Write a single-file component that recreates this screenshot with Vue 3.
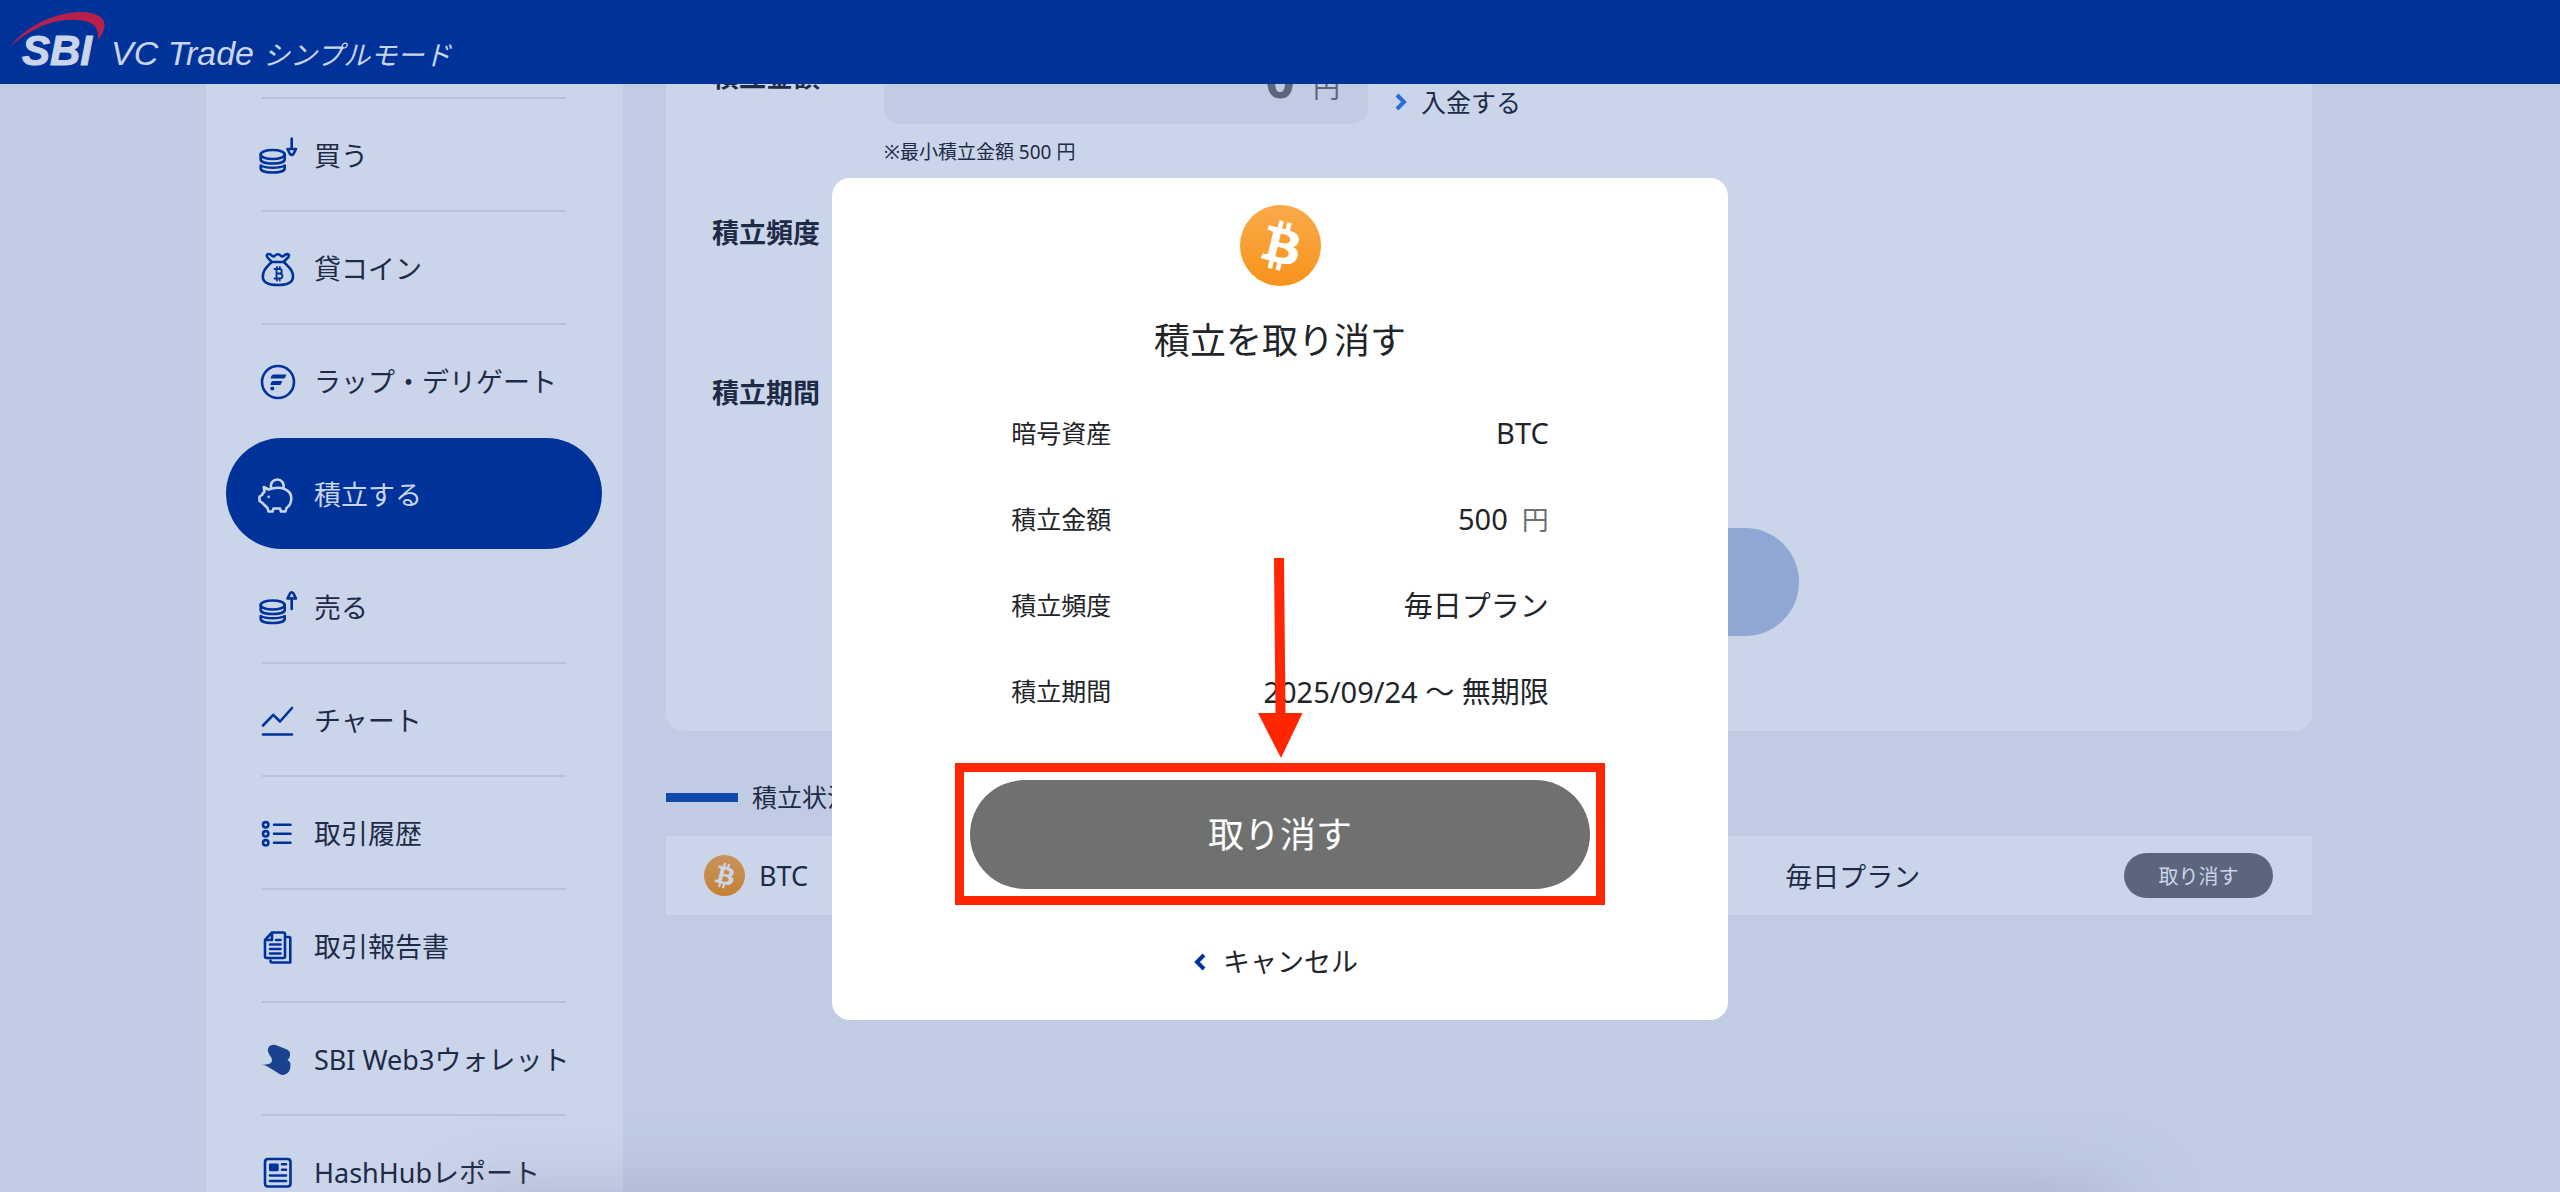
<template>
  <div class="app">
    <header class="header">
      <a href="#" class="brand">
        <span class="brand-logo">
          <svg class="swoosh" viewBox="0 0 96 36" aria-hidden="true">
            <path d="M0 34C12 17 40 1 69 0C88 0 96 7 93 17C92 21 90 24 87 28C88 17 84 9 66 8C42 6 18 18 0 34Z" fill="#b8204c" />
          </svg>
          SBI
        </span>
        <span class="brand-name">VC Trade</span>
        <span class="brand-mode">シンプルモード</span>
      </a>
    </header>

    <div class="content">
      <nav class="sidebar">
        <ul>
          <li v-for="item in menu" :key="item.label" :class="{ active: item.active }">
            <a href="#">
              <svg class="menu-icon" viewBox="0 0 40 40" aria-hidden="true">
                <g v-if="item.icon === 'bag'">
                  <path d="M13.5 14C8 20 4.8 22.500 4.800 28.500C4.800 34.500 10.500 37 20 37S35 34.500 35 28.500C35 22.500 31.500 20 26 14Z" />
                  <path d="M13.500 14C12.500 11.500 8.500 10 8.700 7.500C9 5.500 11.500 5.800 13 6.800C14.500 9 16 9 17 7.500C18.500 5.800 21 5.800 22.500 7.500C24 9 25.500 9 27 6.800C28.500 5.800 30.800 5.800 31 7.500C31 10 27 11.500 26 14" />
                  <path class="thin" d="M16.500 21H21.500C24.500 21 24.500 25.500 21.500 25.500H18.500M21.500 25.500C25.500 25.500 25.500 30.500 21.500 30.500H16.500M18.500 21V30.500M19 19V21M21.800 19V21M19 30.500V32.500M21.800 30.500V32.500" />
                </g>
                <g v-else>
                  <path v-for="(d, i) in icons[item.icon].lines" :key="i" :d="d" />
                  <path v-for="(d, i) in icons[item.icon].fills" :key="'f' + i" :d="d" class="solid" :class="item.icon" />
                </g>
              </svg>
              <span>{{ item.label }}</span>
            </a>
          </li>
        </ul>
      </nav>

      <main class="main">
        <form class="plan-form" @submit.prevent>
          <div class="form-row">
            <label class="form-label tall" for="amount">積立金額</label>
            <div>
              <div class="amount-line">
                <div class="amount-box">
                  <input id="amount" v-model="amount" type="text" inputmode="numeric" />
                  <span class="unit">円</span>
                </div>
                <a href="#" class="deposit">
                  <svg class="chevron" viewBox="0 0 12 18" aria-hidden="true"><path d="M2 2L9 9L2 16" /></svg>
                  入金する
                </a>
              </div>
              <p class="note">※最小積立金額 500 円</p>
            </div>
          </div>
          <div class="form-row frequency">
            <div class="form-label">積立頻度</div>
          </div>
          <div class="form-row period">
            <div class="form-label">積立期間</div>
          </div>
          <button type="submit" class="submit"></button>
        </form>

        <h2 class="section-title">積立状況</h2>
        <table class="plans">
          <tbody>
            <tr v-for="plan in plans" :key="plan.asset">
              <td class="asset">
                <div>
                  <svg class="coin" viewBox="0 0 32 32" aria-hidden="true">
                    <circle cx="16" cy="16" r="16" fill="url(#coin-dim)" />
                    <path :d="bitcoin" fill="#cbd5ea" />
                  </svg>
                  {{ plan.asset }}
                </div>
              </td>
              <td>{{ plan.frequency }}</td>
              <td class="action"><button type="button">取り消す</button></td>
            </tr>
          </tbody>
        </table>
      </main>
    </div>

    <div class="bottom-shade"></div>

    <div class="overlay">
      <section class="modal" role="dialog" aria-modal="true" aria-labelledby="modal-title">
        <svg class="modal-coin" viewBox="0 0 32 32" aria-hidden="true">
          <defs>
            <linearGradient id="coin" x1="0" y1="0" x2="0" y2="1">
              <stop offset="0" stop-color="#f9aa4b" />
              <stop offset="1" stop-color="#f7931a" />
            </linearGradient>
            <linearGradient id="coin-dim" x1="0" y1="0" x2="0" y2="1">
              <stop offset="0" stop-color="#c8935c" />
              <stop offset="1" stop-color="#c68235" />
            </linearGradient>
          </defs>
          <circle cx="16" cy="16" r="16" fill="url(#coin)" />
          <path :d="bitcoin" fill="#fff" />
        </svg>
        <h1 id="modal-title">積立を取り消す</h1>
        <dl>
          <div v-for="row in details" :key="row.label">
            <dt>{{ row.label }}</dt>
            <dd>{{ row.value }}<span v-if="row.unit">{{ row.unit }}</span></dd>
          </div>
        </dl>
        <div class="confirm">
          <button type="button">取り消す</button>
          <div class="highlight"></div>
          <svg class="arrow" viewBox="0 0 46 200" aria-hidden="true">
            <path d="M17 0H27L28.500 155H45.500L24 200L1 155H18.500Z" />
          </svg>
        </div>
        <button type="button" class="cancel">
          <svg class="chevron" viewBox="0 0 12 18" aria-hidden="true"><path d="M10 2L3 9L10 16" /></svg>
          キャンセル
        </button>
      </section>
    </div>
  </div>
</template>

<script setup>
import { ref } from 'vue'

const amount = ref('0')

const menu = [
  { label: '買う', icon: 'buy' },
  { label: '貸コイン', icon: 'bag' },
  { label: 'ラップ・デリゲート', icon: 'wrap' },
  { label: '積立する', icon: 'piggy', active: true },
  { label: '売る', icon: 'sell' },
  { label: 'チャート', icon: 'chart' },
  { label: '取引履歴', icon: 'history' },
  { label: '取引報告書', icon: 'report' },
  { label: 'SBI Web3ウォレット', icon: 'web3' },
  { label: 'HashHubレポート', icon: 'news' },
]

const plans = [{ asset: 'BTC', frequency: '毎日プラン' }]

const details = [
  { label: '暗号資産', value: 'BTC' },
  { label: '積立金額', value: '500', unit: '円' },
  { label: '積立頻度', value: '毎日プラン' },
  { label: '積立期間', value: '2025/09/24 〜 無期限' },
]

const icons = {
  buy: {
    lines: [
      'M2.700 19.500A12 4.500 0 0 1 26.700 19.500A12 4.500 0 0 1 2.700 19.500Z',
      'M2.700 19.500V24.500C2.700 27 8 28.500 14.700 28.500S26.700 27 26.700 24.500V19.500',
      'M2.700 30.500V33.500C2.700 36 8 37.500 14.700 37.500S26.700 36 26.700 33.500V30.500C22 33.500 7.500 33.500 2.700 30.500Z',
      'M33.700 3.500V14M29.500 14H38L35.500 19Q33.700 20.800 32 19Z',
    ],
  },
  sell: {
    lines: [
      'M2.700 18A12 4.500 0 0 1 26.700 18A12 4.500 0 0 1 2.700 18Z',
      'M2.700 18V23C2.700 25.500 8 27 14.700 27S26.700 25.500 26.700 23V18',
      'M2.700 29V32C2.700 34.500 8 36 14.700 36S26.700 34.500 26.700 32V29C22 32 7.500 32 2.700 29Z',
      'M33.700 22V11M29.500 11.500H38L35.500 6.500Q33.700 4 32 6.500Z',
    ],
  },
  wrap: {
    lines: ['M4 21A16 16 0 0 1 36 21A16 16 0 0 1 4 21Z'],
    fills: [
      'M15.500 13.500H28.500L26.500 17.500H12.700Q13 14 15.500 13.500Z',
      'M15 20H24.300L22.500 24H12.500Q12.500 20.500 15 20Z',
      'M12.300 27.500A2 2 0 0 1 16.300 27.500A2 2 0 0 1 12.300 27.500Z',
    ],
  },
  piggy: {
    lines: [
      'M13 14.500C12 8.500 15.500 5.500 19.300 5.500S26.500 8.500 25.500 14.500',
      'M5.800 13L10.500 15.500C16 13.500 22 13.500 25.500 14.500C31 16.500 33.500 20 33.300 25C33 29.500 31.500 32 28.500 34L27.500 37.500H23L22 34.500H15.500L14.500 37.500H10.500L9.500 34C7.500 32 5.500 30.500 4.500 29L1.500 27V22.500L4 21C4.500 19.500 5.500 18.500 6.500 17.500Z',
    ],
    fills: ['M9.400 22.800A1.300 1.300 0 0 1 12 22.800A1.300 1.300 0 0 1 9.400 22.800Z'],
  },
  chart: {
    lines: ['M5 25.500L15.300 14.800L22 21.500L34 8', 'M5 34.500H34'],
  },
  history: {
    lines: [
      'M5 11.800A2.700 2.700 0 0 1 10.400 11.800A2.700 2.700 0 0 1 5 11.800ZM16 11.800H32.500',
      'M5 20.800A2.700 2.700 0 0 1 10.400 20.800A2.700 2.700 0 0 1 5 20.800ZM16 20.800H32.500',
      'M5 29.800A2.700 2.700 0 0 1 10.400 29.800A2.700 2.700 0 0 1 5 29.800ZM16 29.800H32.500',
    ],
  },
  report: {
    lines: [
      'M7 14L14 6.500H25.500Q27 6.500 27 8V30.500Q27 32 25.500 32H8.500Q7 32 7 30.500Z',
      'M14 7V14H8',
      'M29 11H31Q32.300 11 32.300 12.500V36.500H13.500Q12.500 36.500 12.500 34.500',
      'M18 14H22.500M12 18.500H22.500M12 23H22.500M12 27.500H22.500',
    ],
  },
  web3: {
    fills: [
      'M14 6Q16 5.300 19 6.500L29 10.500Q32.500 12 32 16Q32 19 29.500 21Q32.500 22.500 32.500 26Q32.500 33 28 35Q25 36.800 21.500 35L12 29Q8.500 26 3.300 25.500Q9 26 12 24.500Q15 22.500 13.500 19Q11 15.500 9.800 12Q9.500 7 14 6Z',
    ],
  },
  news: {
    lines: [
      'M10 7H29.500Q32.500 7 32.500 10V31.500Q32.500 34.500 29.500 34.500H10Q7 34.500 7 31.500V10Q7 7 10 7Z',
      'M24 12.300H28M24 17.700H28M12 23.500H28M12 29H28',
    ],
    fills: ['M12 11.500H19.500Q20.700 11.500 20.700 12.700V18Q20.700 19.300 19.500 19.300H12Q11 19.300 11 18V12.700Q11 11.500 12 11.500Z'],
  },
}

const bitcoin =
  'M23.189 14.02c.314-2.096-1.283-3.223-3.465-3.975l.708-2.84-1.728-.43-.69 2.765c-.454-.114-.92-.22-1.385-.326l.695-2.783L15.596 6l-.708 2.839c-.376-.086-.746-.17-1.104-.26l.002-.009-2.384-.595-.46 1.846s1.283.294 1.256.312c.7.175.826.638.805 1.006l-.806 3.235c.048.012.11.03.18.057l-.183-.045-1.13 4.532c-.086.212-.303.531-.793.41.018.025-1.256-.313-1.256-.313l-.858 1.978 2.25.561c.418.105.828.215 1.231.318l-.715 2.872 1.727.43.708-2.84c.472.127.93.245 1.378.357l-.706 2.828 1.728.43.715-2.866c2.948.558 5.164.333 6.097-2.333.752-2.146-.037-3.385-1.588-4.192 1.13-.26 1.98-1.003 2.207-2.538zm-3.95 5.538c-.533 2.147-4.148.986-5.32.695l.95-3.805c1.172.293 4.929.872 4.37 3.11zm.535-5.569c-.487 1.953-3.495.96-4.47.717l.86-3.45c.975.243 4.118.696 3.61 2.733z'
</script>

<style>
body {
  margin: 0;
  background: #c1cce4;
}
</style>

<style scoped>
.app {
  display: flex;
  flex-direction: column;
  height: 100vh;
  overflow: hidden;
  position: relative;
  background: #c1cce4;
  color: #1d2b47;
  font-family: "Noto Sans", "Noto Sans CJK JP", sans-serif;
  font-size: 27px;
}

a {
  color: inherit;
  text-decoration: none;
}

button,
input {
  border: 0;
  padding: 0;
  font-family: inherit;
  color: inherit;
}

button {
  cursor: pointer;
}

.header {
  flex: none;
  height: 84px;
  background: #003399;
}

.brand {
  display: flex;
  align-items: baseline;
  height: 84px;
  padding-left: 22px;
  color: #cbd5ea;
  font-family: "Liberation Sans", "Noto Sans CJK JP", sans-serif;
  font-style: italic;
  line-height: 102px;
}

.brand-logo {
  position: relative;
  margin-right: 19px;
  font-size: 42px;
  font-weight: 700;
  -webkit-text-stroke: 1px #cbd5ea;
}

.swoosh {
  position: absolute;
  left: -11px;
  top: 12px;
  width: 96px;
  height: 36px;
}

.brand-name {
  margin-right: 9px;
  font-size: 34px;
}

.brand-mode {
  font-size: 27px;
}

.content {
  flex: 1;
  min-height: 0;
  display: flex;
  gap: 43px;
  padding: 0 248px 0 206px;
  overflow: hidden;
}

.sidebar {
  flex: none;
  box-sizing: border-box;
  width: 417px;
  padding: 13px 57px 0 56px;
  background: #cbd5ea;
}

.sidebar ul {
  margin: 0;
  padding: 0;
  list-style: none;
}

.sidebar li {
  border-top: 2px solid #b7c3da;
}

.sidebar li.active,
.sidebar li.active + li {
  border-color: transparent;
}

.sidebar a {
  display: flex;
  align-items: center;
  gap: 16px;
  height: 111px;
  margin: 0 -36px;
  padding: 0 32px;
  border-radius: 56px;
  white-space: nowrap;
}

.active a {
  background: #003399;
  color: #cbd5ea;
}

.menu-icon {
  flex: none;
  width: 40px;
  height: 40px;
  fill: none;
  stroke: #003399;
  stroke-width: 2.6;
  stroke-linecap: round;
  stroke-linejoin: round;
}

.active .menu-icon {
  stroke: #cbd5ea;
}

.menu-icon .thin {
  stroke-width: 1.8;
}

.menu-icon .solid {
  fill: #003399;
  stroke: none;
}

.menu-icon .solid.piggy {
  fill: #cbd5ea;
}

.menu-icon .solid.web3 {
  fill: #19428f;
}

.main {
  flex: 1;
  min-width: 0;
}

/* scrolled so that the top of the form sits under the header */
.plan-form {
  margin-top: -50px;
  padding: 0 46px 95px;
  border-radius: 0 0 18px 18px;
  background: #cbd5ea;
}

.form-row {
  display: grid;
  grid-template-columns: 172px 1fr;
}

.form-label {
  font-weight: 700;
  line-height: 40px;
}

.form-label.tall {
  line-height: 86px;
}

.form-row.frequency {
  margin-top: 47px;
}

.form-row.period {
  margin-top: 120px;
}

.amount-line {
  display: flex;
  align-items: flex-end;
  gap: 27px;
}

.amount-box {
  display: flex;
  align-items: baseline;
  gap: 18px;
  box-sizing: border-box;
  width: 484px;
  height: 90px;
  padding: 0 28px;
  border-radius: 16px;
  background: #c1cce4;
  color: #5b667b;
}

.amount-box input {
  flex: 1;
  min-width: 0;
  height: 86px;
  background: none;
  font-size: 52px;
  font-weight: 700;
  text-align: right;
}

.unit {
  font-size: 27px;
}

.deposit {
  display: flex;
  align-items: center;
  gap: 14px;
  font-size: 25px;
  line-height: 44px;
}

.chevron {
  width: 12px;
  height: 18px;
  fill: none;
  stroke: #2a6bd8;
  stroke-width: 4;
}

.note {
  margin: 14px 0 0;
  font-size: 19px;
  line-height: 28px;
}

.submit {
  display: block;
  width: 620px;
  height: 108px;
  margin: 115px auto 0;
  border-radius: 54px;
  background: #90a6d3;
}

.section-title {
  display: flex;
  align-items: center;
  gap: 14px;
  margin: 47px 0 20px;
  font-size: 25px;
  font-weight: 400;
  line-height: 38px;
}

.section-title::before {
  content: "";
  width: 72px;
  height: 9px;
  background: #124aab;
}

.plans {
  width: 100%;
  border-collapse: collapse;
  table-layout: fixed;
  background: #cbd5ea;
}

.plans td {
  height: 79px;
  padding: 0;
}

.plans .asset {
  width: 68%;
}

.asset div {
  display: flex;
  align-items: center;
  gap: 14px;
  padding-left: 38px;
}

.coin {
  width: 41px;
  height: 41px;
}

.plans .action {
  padding-right: 39px;
  text-align: right;
}

.action button {
  display: block;
  width: 149px;
  height: 45px;
  margin-left: auto;
  border-radius: 23px;
  background: #5b667b;
  color: #cbd5ea;
  font-size: 20px;
}

.bottom-shade {
  position: absolute;
  left: 460px;
  right: 440px;
  bottom: -48px;
  height: 40px;
  border-radius: 20px;
  box-shadow: 0 0 72px rgba(120, 120, 160, 0.5);
}

.overlay {
  position: absolute;
  inset: 0;
  display: flex;
  align-items: center;
  justify-content: center;
  padding-top: 6px;
}

.modal {
  display: flex;
  flex-direction: column;
  align-items: center;
  box-sizing: border-box;
  width: 35%;
  min-width: 700px;
  padding: 27px 0 38px;
  border-radius: 18px;
  background: #fff;
  color: #212529;
}

.modal-coin {
  width: 81px;
  height: 81px;
}

.modal h1 {
  margin: 29px 0 22px;
  font-size: 36px;
  font-weight: 400;
  line-height: 52px;
}

.modal dl {
  width: 60%;
  margin: 0;
}

.modal dl div {
  display: flex;
  align-items: center;
  justify-content: space-between;
  height: 86px;
}

.modal dt {
  font-size: 25px;
}

.modal dd {
  margin: 0;
  font-size: 29px;
}

.modal dd span {
  margin-left: 14px;
  color: #6f7170;
  font-size: 27px;
}

.confirm {
  position: relative;
  margin-top: 47px;
}

.confirm button {
  display: block;
  width: 620px;
  height: 109px;
  padding-bottom: 4px;
  border-radius: 55px;
  background: #6f7170;
  color: #fff;
  font-size: 36px;
}

.highlight {
  position: absolute;
  inset: -17px -15px -16px;
  border: 9px solid #ff2600;
  pointer-events: none;
}

.arrow {
  position: absolute;
  left: 287px;
  bottom: 131px;
  width: 46px;
  height: 200px;
  fill: #ff2600;
}

.cancel {
  display: flex;
  align-items: center;
  gap: 17px;
  margin-top: 53px;
  padding-right: 8px;
  background: none;
  font-size: 27px;
  line-height: 40px;
}

.cancel .chevron {
  stroke: #003399;
}
</style>
